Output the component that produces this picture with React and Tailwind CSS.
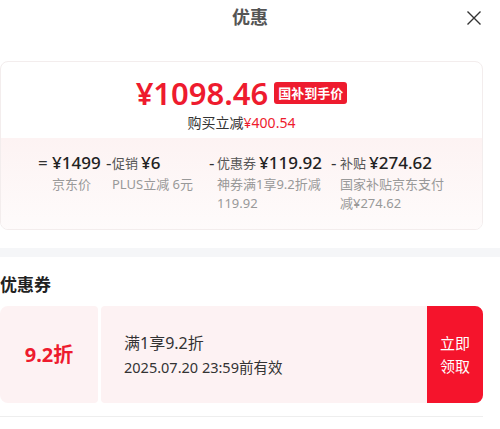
const FONT = { fontFamily: '"Noto Sans", "Noto Sans CJK SC", sans-serif' };

const items = [
  { op: "=", opW: "w-[14px]", w: "w-[54px]", label: "", value: "¥1499", sub: ["京东价"] },
  { op: "-", opW: "w-[6px]", w: "w-[97px]", label: "促销", value: "¥6", sub: ["PLUS立减 6元"] },
  { op: "-", opW: "w-[8px]", w: "w-[114px]", label: "优惠券", value: "¥119.92", sub: ["神券满1享9.2折减", "119.92"] },
  { op: "-", opW: "w-[9px]", w: "w-[130px]", label: "补贴", value: "¥274.62", sub: ["国家补贴京东支付", "减¥274.62"] },
];

function CloseIcon() {
  return (
    <svg width="16" height="16" viewBox="0 0 16 16" fill="none" stroke="#333" strokeWidth="1.4">
      <path d="M1.5 1.5 L14.5 14.5 M14.5 1.5 L1.5 14.5" />
    </svg>
  );
}

export default function App() {
  return (
    <div className="w-[500px] h-[429px] overflow-hidden bg-white" style={FONT}>
      <div className="grid h-[35px] grid-cols-[1fr_auto_1fr] items-center">
        <div />
        <div className="text-[18px] font-bold text-[#555]">优惠</div>
        <div className="flex justify-end pr-[18px]">
          <CloseIcon />
        </div>
      </div>

      <div className="mt-[26px] w-[483px] overflow-hidden rounded-lg border border-[#f3eded]">
        <div className="flex h-[76px] flex-col items-center pt-[13px]">
          <div className="flex items-center gap-[6px]">
            <span className="text-[31px] font-semibold leading-[36px] text-[#ee1b2e]">¥1098.46</span>
            <span className="rounded-[3px] bg-[#ee1b2e] px-[4px] text-[13px] font-bold leading-[22px] text-white">国补到手价</span>
          </div>
          <div className="mt-[2px] text-[14px] leading-[20px] text-[#333]">
            购买立减<span className="text-[#ee1b2e]">¥400.54</span>
          </div>
        </div>
        <div className="flex h-[91px] bg-gradient-to-b from-[#fdf3f3] to-[#fefbfb] pl-[37px] pt-[13px]">
          {items.map((it) => (
            <div key={it.value} className="flex">
              <span className={`${it.opW} text-[17px] leading-[24px] text-[#333]`}>{it.op}</span>
              <div className={it.w}>
                <div className="flex items-center gap-[3px] whitespace-nowrap leading-[24px]">
                  {it.label ? <span className="text-[13px] text-[#555]">{it.label}</span> : null}
                  <span className="text-[17px] font-medium text-[#222]">{it.value}</span>
                </div>
                <div className="text-[13px] leading-[19px] text-[#999]">
                  {it.sub.map((s) => (
                    <div key={s} className="whitespace-nowrap">{s}</div>
                  ))}
                </div>
              </div>
            </div>
          ))}
        </div>
      </div>

      <div className="mt-[18px] h-[9px] bg-[#f5f6f8]" />

      <div className="mt-[16px] text-[17px] font-bold leading-[24px] text-[#222]">优惠券</div>

      <div className="mt-[9px] flex h-[97px] w-[483px] gap-[3px]">
        <div className="flex w-[98px] items-center justify-center rounded-l-lg rounded-r-[4px] bg-[#fdf2f3]">
          <span className="text-[20px] font-bold text-[#ee1b2e]">9.2折</span>
        </div>
        <div className="flex flex-1 overflow-hidden rounded-l-[4px] rounded-r-lg bg-[#fdf2f3]">
          <div className="flex flex-1 flex-col justify-center pl-[23px] text-[#333]">
            <div className="text-[16px] leading-[24px]">满1享9.2折</div>
            <div className="text-[14.5px] leading-[24px]">2025.07.20 23:59前有效</div>
          </div>
          <div className="flex w-[56px] items-center justify-center bg-[#f5142c] text-center text-[15px] leading-[23px] text-white">
            立即
            <br />
            领取
          </div>
        </div>
      </div>

      <div className="mt-[13px] h-px w-[483px] bg-[#eeeeee]" />
    </div>
  );
}
